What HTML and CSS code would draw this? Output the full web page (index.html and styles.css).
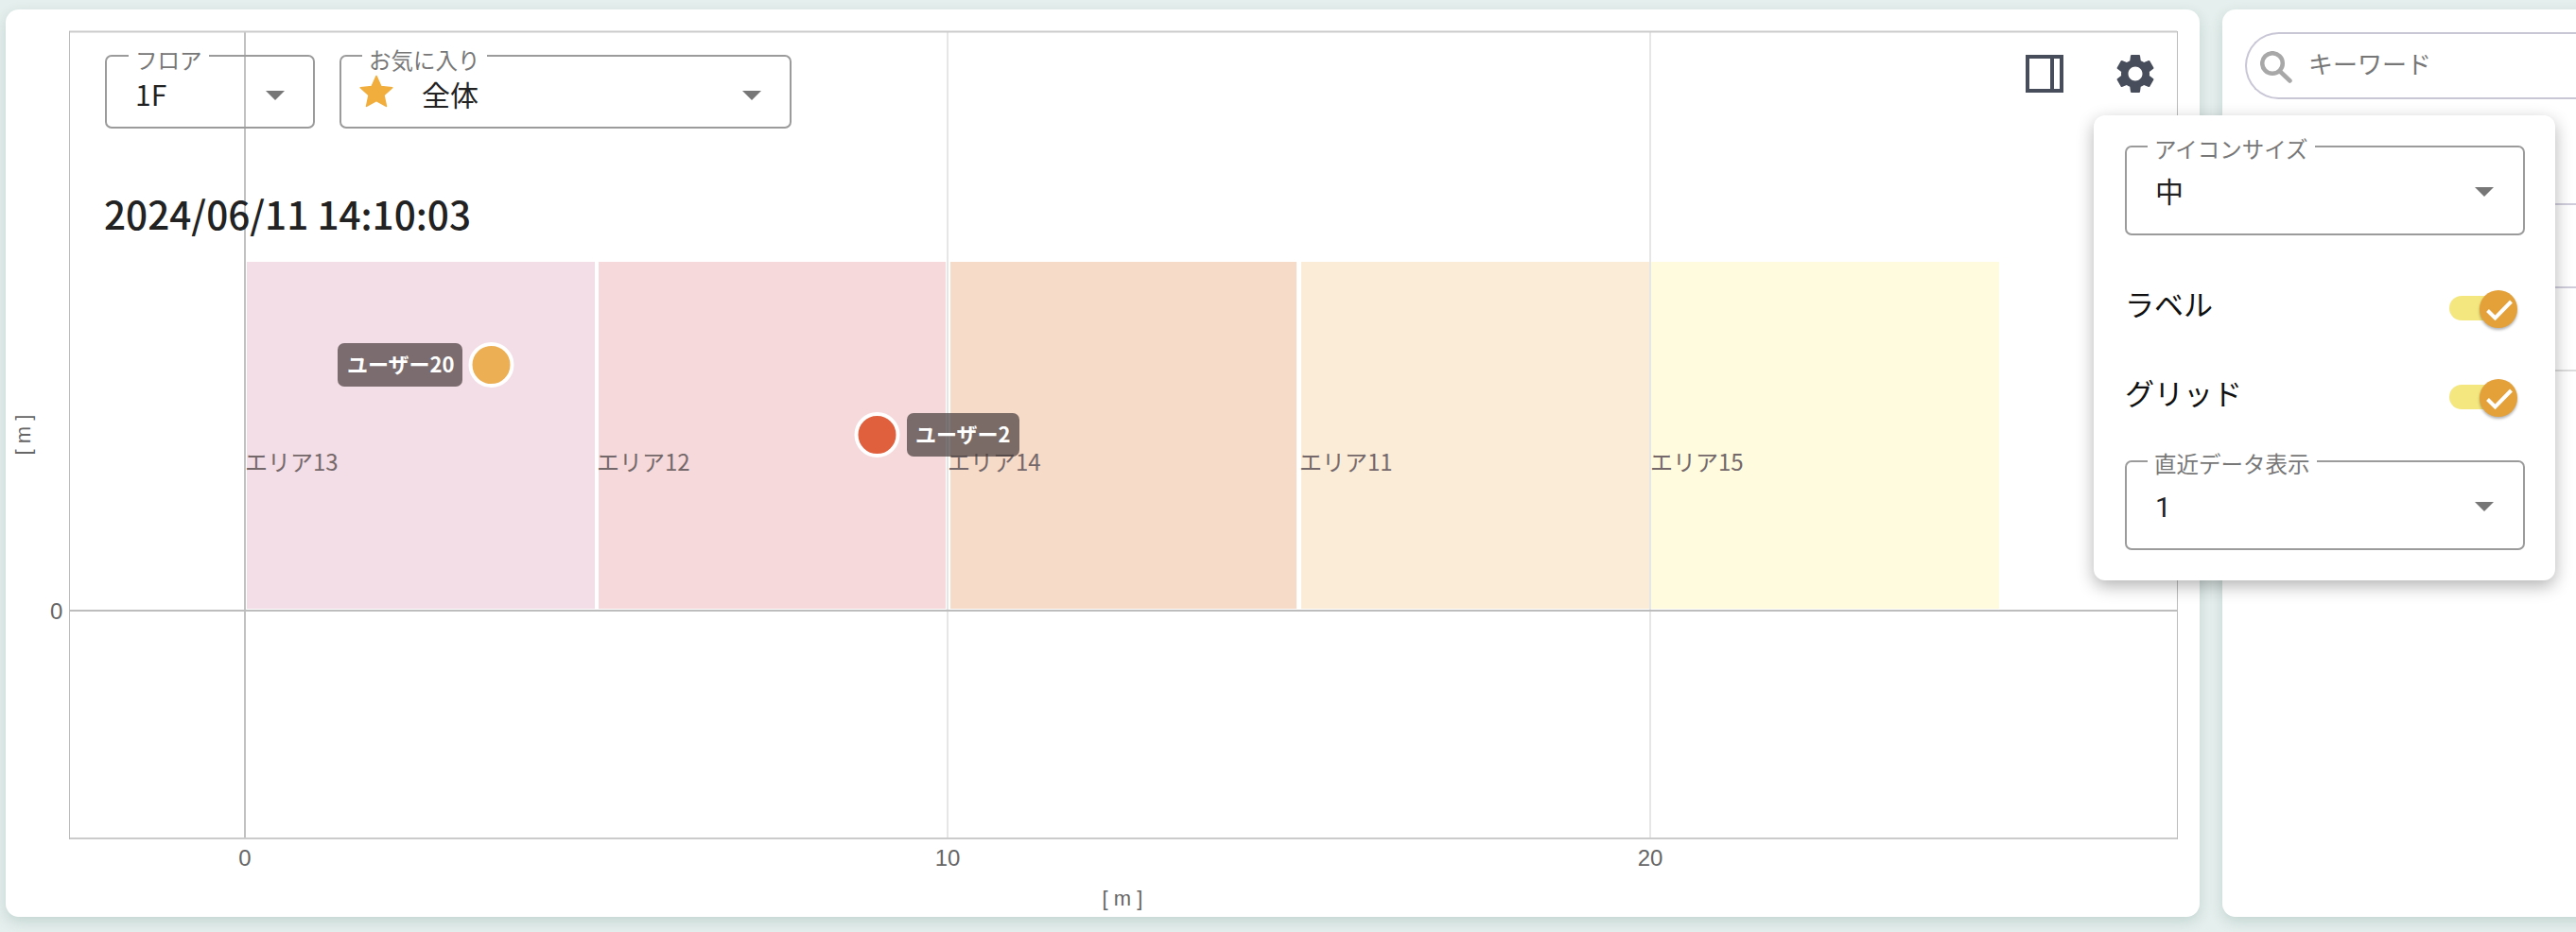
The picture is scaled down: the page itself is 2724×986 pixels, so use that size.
FILE: index.html
```html
<!DOCTYPE html>
<html lang="ja">
<head>
    <meta charset="UTF-8">
    <meta name="viewport" content="width=device-width, initial-scale=1.0">
    <title>フロアマップ</title>
    <link rel="stylesheet" href="styles.css">
</head>
<body>
    <div class="page">
        <main class="panel chart-panel">
            <!-- viewBox uses page coordinates -->
            <svg class="chart" viewBox="6 10 2320 960">
                <rect class="band-13" x="261" y="277" width="368" height="367"/>
                <rect class="band-12" x="633" y="277" width="367" height="367"/>
                <rect class="band-14" x="1005" y="277" width="366" height="367"/>
                <rect class="band-11" x="1376" y="277" width="368" height="367"/>
                <rect class="band-15" x="1746" y="277" width="368" height="367"/>

                <line class="grid-zero" x1="259" y1="34" x2="259" y2="887"/>
                <line class="grid" x1="1002" y1="34" x2="1002" y2="887"/>
                <line class="grid" x1="1745" y1="34" x2="1745" y2="887"/>
                <line class="axis-zero" x1="73" y1="646" x2="2302" y2="646"/>

                <line class="frame-h" x1="73" y1="33.5" x2="2302" y2="33.5"/>
                <line class="frame-h" x1="73" y1="887" x2="2302" y2="887"/>
                <line class="frame-v" x1="73.5" y1="33" x2="73.5" y2="888"/>
                <line class="frame-v" x1="2302.5" y1="33" x2="2302.5" y2="888"/>

                <text class="area-label" x="259" y="498">エリア13</text>
                <text class="area-label" x="631" y="498">エリア12</text>
                <text class="area-label" x="1002" y="498">エリア14</text>
                <text class="area-label" x="1374" y="498">エリア11</text>
                <text class="area-label" x="1745" y="498">エリア15</text>

                <rect class="user-tag" x="357" y="363" width="132" height="46" rx="7"/>
                <text class="user-name" x="367" y="394">ユーザー20</text>
                <circle class="user-dot dot-orange" cx="519.5" cy="386" r="22"/>

                <circle class="user-dot dot-red" cx="927.5" cy="460" r="22"/>
                <rect class="user-tag" x="959" y="437" width="119" height="46" rx="7"/>
                <text class="user-name" x="968" y="468">ユーザー2</text>

                <text class="tick tick-center" x="259" y="916">0</text>
                <text class="tick tick-center" x="1002" y="916">10</text>
                <text class="tick tick-center" x="1745" y="916">20</text>
                <text class="tick" x="53" y="655">0</text>
                <text class="axis-title tick-center" x="1187" y="958">[ m ]</text>
                <text class="axis-title tick-center" transform="translate(32 460) rotate(-90)">[ m ]</text>
            </svg>

            <div class="chart-overlay">
                <div class="toolbar">
                    <fieldset class="select select-floor">
                        <legend>フロア</legend>
                        <span class="select-value">1F</span>
                        <span class="select-arrow"></span>
                    </fieldset>
                    <fieldset class="select select-favorite">
                        <legend>お気に入り</legend>
                        <svg class="star" viewBox="0 0 24 24"><path d="M12 1.6l3.1 6.9 7.5.8-5.6 5 1.6 7.4L12 18l-6.6 3.7L7 14.3l-5.6-5 7.5-.8z"/></svg>
                        <span class="select-value">全体</span>
                        <span class="select-arrow"></span>
                    </fieldset>
                    <div class="tools">
                        <svg class="tool-panel" viewBox="0 0 40 40"><path d="M2 2h36v36H2zM28 2v36"/></svg>
                        <svg class="tool-gear" viewBox="0 0 24 24"><path d="M19.14 12.94c.04-.3.06-.61.06-.94 0-.32-.02-.64-.07-.94l2.03-1.58c.18-.14.23-.41.12-.61l-1.92-3.32c-.12-.22-.37-.29-.59-.22l-2.39.96c-.5-.38-1.03-.7-1.62-.94l-.36-2.54c-.04-.24-.24-.41-.48-.41h-3.84c-.24 0-.43.17-.47.41l-.36 2.54c-.59.24-1.13.57-1.62.94l-2.39-.96c-.22-.08-.47 0-.59.22L2.74 8.87c-.12.21-.08.47.12.61l2.03 1.58c-.05.3-.09.63-.09.94s.02.64.07.94l-2.03 1.58c-.18.14-.23.41-.12.61l1.92 3.32c.12.22.37.29.59.22l2.39-.96c.5.38 1.03.7 1.62.94l.36 2.54c.05.24.24.41.48.41h3.84c.24 0 .44-.17.47-.41l.36-2.54c.59-.24 1.13-.56 1.62-.94l2.39.96c.22.08.47 0 .59-.22l1.92-3.32c.12-.22.07-.47-.12-.61l-2.01-1.58zM12 15.6c-1.98 0-3.6-1.62-3.6-3.6s1.62-3.6 3.6-3.6 3.6 1.62 3.6 3.6-1.62 3.6-3.6 3.6z"/></svg>
                    </div>
                </div>
                <div class="timestamp">2024/06/11 14:10:03</div>
            </div>
        </main>

        <aside class="panel side-panel">
            <div class="search">
                <svg class="search-icon" viewBox="0 0 34 34"><circle cx="13" cy="13" r="10.8"/><path d="M21 21.5L31.5 31.5"/></svg>
                <span class="search-text">キーワード</span>
            </div>
            <div class="side-row"></div>
            <div class="side-row"></div>
            <div class="side-row"></div>
        </aside>

        <div class="settings">
            <fieldset class="select select-wide">
                <legend>アイコンサイズ</legend>
                <span class="select-value">中</span>
                <span class="select-arrow"></span>
            </fieldset>
            <div class="toggle-row">
                <span class="toggle-label">ラベル</span>
                <span class="switch"><span class="switch-thumb"><svg viewBox="0 0 40 40"><path d="M8.5 21.5l8 8L33.5 12"/></svg></span></span>
            </div>
            <div class="toggle-row">
                <span class="toggle-label">グリッド</span>
                <span class="switch"><span class="switch-thumb"><svg viewBox="0 0 40 40"><path d="M8.5 21.5l8 8L33.5 12"/></svg></span></span>
            </div>
            <fieldset class="select select-wide select-recent">
                <legend>直近データ表示</legend>
                <span class="select-value">1</span>
                <span class="select-arrow"></span>
            </fieldset>
        </div>
    </div>
</body>
</html>
```

FILE: styles.css
```css
* {
    box-sizing: border-box;
}

body {
    margin: 0;
    height: 986px;
    overflow: hidden;
    background-color: #e5efed;
    font-family: "Noto Sans CJK JP", "Noto Sans", sans-serif;
    color: #222;
}

.page {
    position: relative;
    display: flex;
    gap: 24px;
    height: 986px;
    padding: 10px 0 16px 6px;
}

.panel {
    position: relative;
    flex: none;
    background: white;
    border-radius: 14px;
    box-shadow: 0 5px 14px rgba(60, 110, 100, 0.2);
}

.chart-panel {
    width: 2320px;
}

.side-panel {
    width: 500px;
    padding: 24px 0 0 24px;
}

/* chart */
.chart {
    display: block;
    width: 2320px;
    height: 960px;
}

.band-13 { fill: #f3dde6; }
.band-12 { fill: #f6d9da; }
.band-14 { fill: #f6dbc9; }
.band-11 { fill: #fbecd8; }
.band-15 { fill: #fefbde; }

.grid { stroke: #dedede; stroke-width: 1.5; }
.grid-zero { stroke: #adadad; stroke-width: 1.5; }
.axis-zero { stroke: #bdbdbd; stroke-width: 2; }
.frame-h { stroke: #cbcbcb; stroke-width: 2; }
.frame-v { stroke: #bcbcbc; stroke-width: 1; }

.area-label {
    font-size: 24px;
    fill: #75686a;
}

.user-tag {
    fill: rgba(70, 60, 60, 0.7);
}

.user-name {
    font-size: 22px;
    font-weight: 700;
    fill: white;
}

.user-dot {
    stroke: white;
    stroke-width: 4;
}

.dot-orange { fill: #edaf54; }
.dot-red { fill: #e0603e; }

.tick {
    font-family: "Liberation Sans", sans-serif;
    font-size: 24px;
    fill: #666;
}

.tick-center {
    text-anchor: middle;
}

.axis-title {
    font-family: "Liberation Sans", sans-serif;
    font-size: 22px;
    fill: #666;
}

/* controls over the chart */
.chart-overlay {
    position: absolute;
    top: 34px;
    left: 105px;
    right: 43px;
}

.toolbar {
    display: flex;
    align-items: flex-start;
    gap: 26px;
}

.select {
    position: relative;
    display: flex;
    align-items: center;
    margin: 0;
    padding: 0 0 10px 30px;
    border: 2px solid #9b9b9b;
    border-radius: 7px;
    min-width: 0;
}

/* top padding drops the text a little below the border line */
.select legend {
    padding: 8px 7px 0;
    margin-left: -8px;
    font-size: 23.5px;
    line-height: 22px;
    color: #777;
}

.select-value {
    font-size: 30px;
    line-height: 40px;
}

.select-arrow {
    position: absolute;
    top: 28px;
    right: 31px;
    border-left: 10px solid transparent;
    border-right: 10px solid transparent;
    border-top: 10px solid #777;
}

.select-floor {
    width: 222px;
    height: 92px;
}

.select-floor legend {
    margin-left: -7px;
}

.select-favorite {
    width: 478px;
    height: 92px;
    padding-left: 18px;
}

.select-favorite legend {
    margin-left: 4px;
}

.select-floor .select-arrow,
.select-favorite .select-arrow {
    top: 22px;
    right: 30px;
}

.star {
    width: 38px;
    height: 38px;
    margin: 0 29px 5px 0;
    fill: #f1ae3d;
    stroke: #f1ae3d;
    stroke-width: 1;
    stroke-linejoin: round;
}

.tools {
    display: flex;
    align-items: center;
    gap: 51px;
    margin-left: auto;
    height: 68px;
}

.tool-panel {
    width: 40px;
    height: 40px;
    fill: none;
    stroke: #474d5b;
    stroke-width: 4;
}

.tool-gear {
    width: 50px;
    height: 50px;
    fill: #474d5b;
}

.timestamp {
    margin-top: 63px;
    margin-left: -1px;
    font-size: 40.5px;
    font-weight: 500;
    line-height: 54px;
}

/* right panel */
.search {
    display: flex;
    align-items: center;
    width: 460px;
    height: 71px;
    padding-left: 14px;
    border: 2px solid #c9c6d6;
    border-right: none;
    border-radius: 36px 0 0 36px;
}

.search-icon {
    width: 34px;
    height: 34px;
    margin: 2px 17px 0 0;
    fill: none;
    stroke: #a8a8a8;
    stroke-width: 4.5;
    stroke-linecap: round;
}

.search-text {
    padding-bottom: 6px;
    font-size: 26px;
    color: #777;
}

.side-row {
    height: 88px;
    border-bottom: 2px solid #cfcddb;
}

.search + .side-row {
    height: 112px;
}

.side-row:last-child {
    border-bottom-color: #dddddd;
}

/* settings popup */
.settings {
    position: absolute;
    top: 122px;
    left: 2214px;
    width: 488px;
    height: 492px;
    padding: 18px 33px 0;
    background: white;
    border-radius: 12px;
    box-shadow: 0 6px 18px rgba(0, 0, 0, 0.3);
    font-family: Roboto, "Noto Sans CJK JP", sans-serif;
}

.select-wide {
    width: 423px;
    height: 109px;
}

.toggle-row {
    display: flex;
    align-items: center;
    justify-content: space-between;
    height: 94px;
    font-size: 31px;
    color: #111;
}

.select-wide + .toggle-row {
    margin-top: 30px;
}

.toggle-label {
    padding-bottom: 12px;
}

.switch {
    position: relative;
    width: 60px;
    height: 26px;
    margin-right: 19px;
    border-radius: 13px;
    background: #f5e77f;
}

.switch-thumb {
    position: absolute;
    top: -6px;
    right: -12px;
    width: 40px;
    height: 40px;
    border-radius: 50%;
    background: #e4a13a;
    box-shadow: 0 2px 3px rgba(0, 0, 0, 0.3);
}

.switch-thumb svg {
    display: block;
    width: 40px;
    height: 40px;
    fill: none;
    stroke: white;
    stroke-width: 4;
}

.select-recent {
    margin-top: 6px;
}
```
